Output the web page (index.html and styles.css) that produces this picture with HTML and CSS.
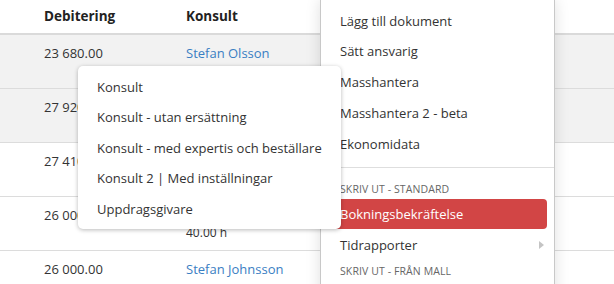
FILE: index.html
```html
<!DOCTYPE html>
<html lang="sv">
<head>
<meta charset="utf-8">
<link rel="stylesheet" href="styles.css">
</head>
<body>
<div class="page">
  <div class="table">
    <div class="row head">
      <div class="cell">Debitering</div>
      <div class="cell">Konsult</div>
    </div>
    <div class="row shade">
      <div class="cell">23 680.00</div>
      <div class="cell"><a class="name">Stefan Olsson</a></div>
    </div>
    <div class="row shade">
      <div class="cell">27 920.00</div>
      <div class="cell"></div>
    </div>
    <div class="row">
      <div class="cell">27 410.00</div>
      <div class="cell"></div>
    </div>
    <div class="row">
      <div class="cell">26 000.00</div>
      <div class="cell"><div class="hours">40.00 h</div></div>
    </div>
    <div class="row">
      <div class="cell">26 000.00</div>
      <div class="cell"><a class="name">Stefan Johnsson</a></div>
    </div>
  </div>

  <div class="menu actions">
    <div class="item">Lägg till dokument</div>
    <div class="item">Sätt ansvarig</div>
    <div class="item">Masshantera</div>
    <div class="item">Masshantera 2 - beta</div>
    <div class="item">Ekonomidata</div>
    <div class="divider"></div>
    <div class="section">Skriv ut - standard</div>
    <div class="item active">Bokningsbekräftelse</div>
    <div class="item sub">Tidrapporter<span class="caret"></span></div>
    <div class="section">Skriv ut - från mall</div>
  </div>

  <div class="menu templates">
    <div class="titem">Konsult</div>
    <div class="titem">Konsult - utan ersättning</div>
    <div class="titem">Konsult - med expertis och beställare</div>
    <div class="titem">Konsult 2 | Med inställningar</div>
    <div class="titem">Uppdragsgivare</div>
  </div>
</div>
</body>
</html>
```

FILE: styles.css
```css
* { box-sizing: border-box; }
html, body {
  margin: 0;
  padding: 0;
  background: #fff;
}
body {
  font-family: "Open Sans", "DejaVu Sans", sans-serif;
  font-size: 13px;
  color: #333;
  width: 614px;
  height: 284px;
  overflow: hidden;
}
.page {
  position: relative;
  width: 614px;
  height: 284px;
  overflow: hidden;
}
.table {
  display: flex;
  flex-direction: column;
}
.row {
  display: grid;
  grid-template-columns: 142px 1fr;
  padding-left: 44px;
  border-bottom: 1px solid #dcdcdc;
  height: 54px;
}
.row.shade { background: #f2f2f2; }
.row.head {
  height: 35px;
  border-bottom: 2px solid #dadada;
  font-weight: 700;
  font-size: 13.5px;
  color: #222;
  align-items: center;
  padding-bottom: 1px;
}
.row:not(.head) .cell {
  padding-top: 9px;
  line-height: 18px;
}
.name {
  color: #3a7ec3;
  display: block;
}
.hours {
  font-size: 12px;
  line-height: 18px;
  margin-top: 18px;
}

.menu {
  position: absolute;
  background: #fff;
}
.actions {
  left: 320px;
  top: 0;
  width: 235px;
  height: 300px;
  border-left: 1px solid #c8c8c8;
  border-right: 1px solid #c8c8c8;
  padding-top: 5.5px;
  box-shadow: 0 0 14px rgba(0, 0, 0, 0.13);
}
.item {
  height: 30.75px;
  line-height: 30.75px;
  margin: 0 7px 0 8px;
  padding: 0 11px;
  border-radius: 4px;
  position: relative;
}
.item.active {
  background: #d24545;
  color: #fff;
  height: 30px;
  line-height: 31px;
}
.item.sub { height: 30px; line-height: 32px; }
.caret {
  position: absolute;
  right: 3px;
  top: 12px;
  width: 0;
  height: 0;
  border-top: 4.5px solid transparent;
  border-bottom: 4.5px solid transparent;
  border-left: 5px solid #c4c4c4;
}
.divider {
  height: 1px;
  background: #dedede;
  margin: 8px 0 0;
}
.section {
  font-size: 10.5px;
  text-transform: uppercase;
  color: #666;
  padding-left: 19px;
  height: 31px;
  line-height: 43px;
  letter-spacing: 0.1px;
}
.actions .section:last-child {
  height: 25px;
  line-height: 25px;
}
.templates {
  left: 78px;
  top: 66px;
  width: 263px;
  height: 163px;
  border-radius: 5px;
  padding-top: 5.75px;
  box-shadow: 0 1px 4px rgba(0, 0, 0, 0.28);
}
.titem {
  height: 30.5px;
  line-height: 30.5px;
  padding-left: 19px;
}
```
